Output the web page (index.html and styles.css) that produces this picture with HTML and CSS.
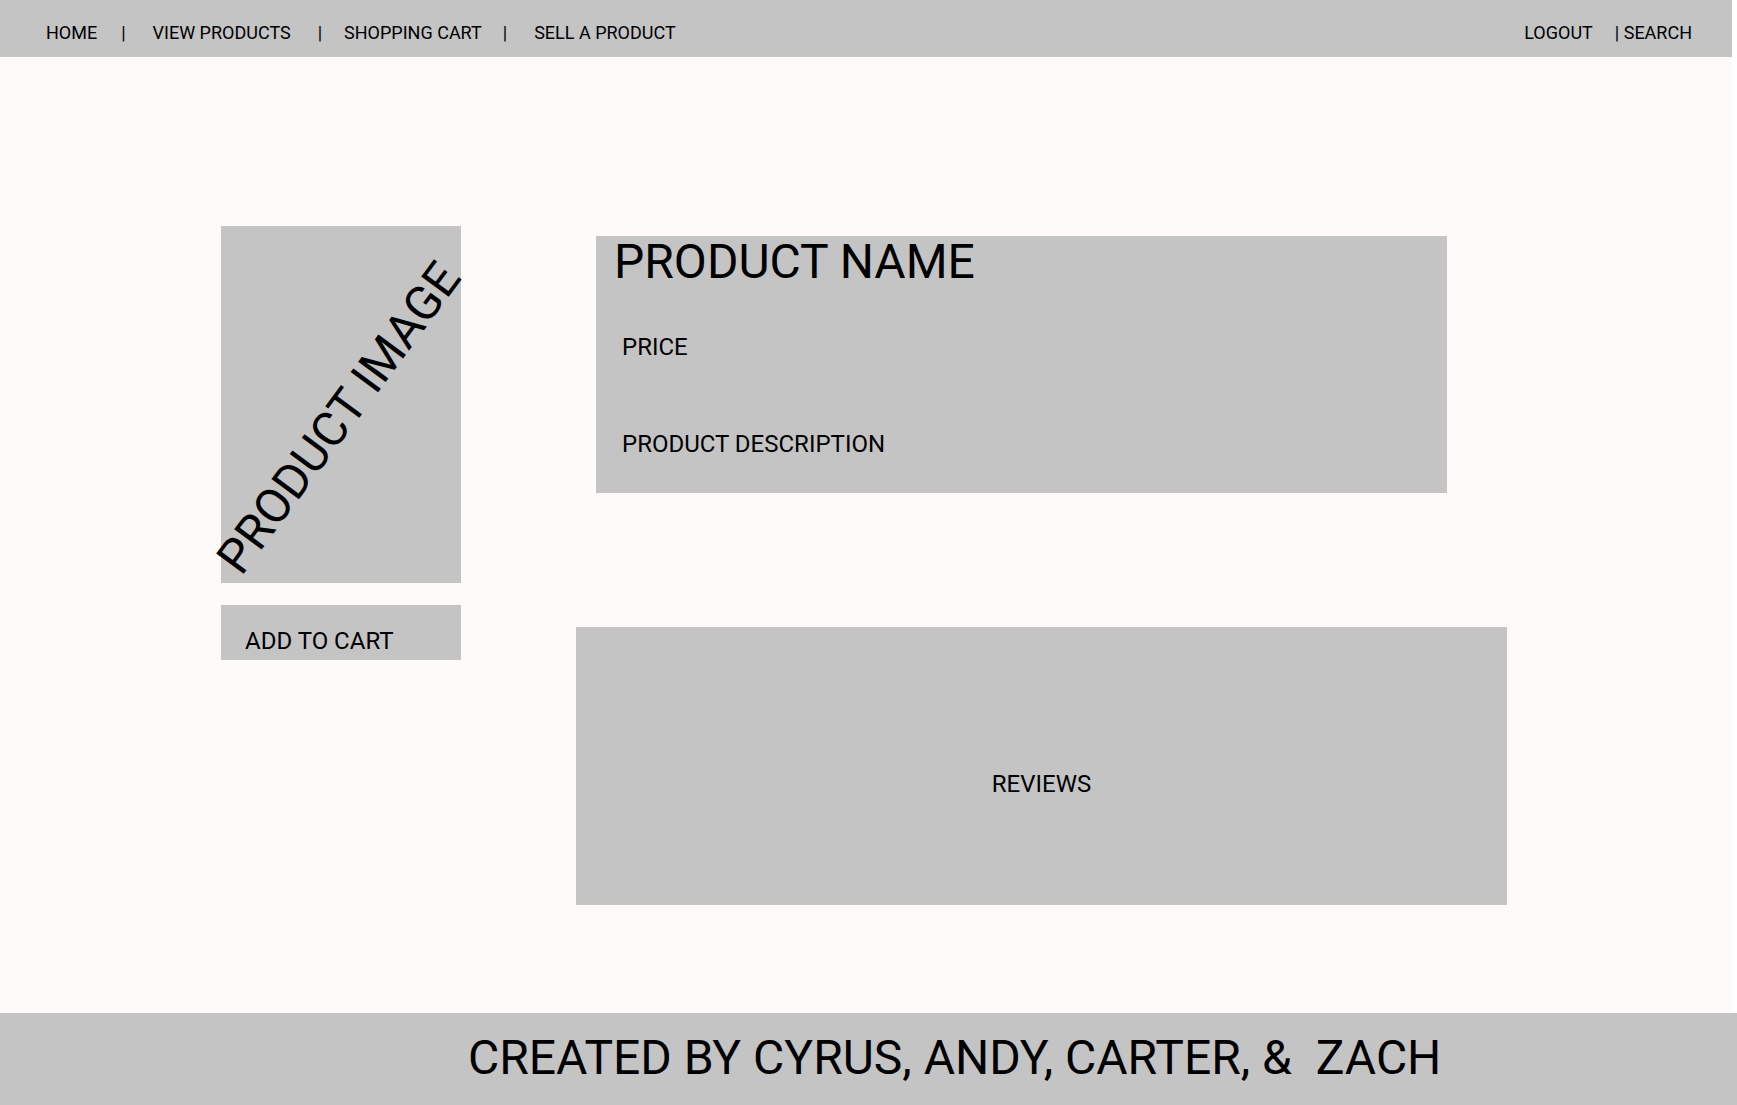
FILE: index.html
```html
<!DOCTYPE html>
<html lang="en">
<head>
<meta charset="utf-8">
<title>Product</title>
<link rel="stylesheet" href="styles.css">
</head>
<body>
<div class="page">
  <nav class="topnav">
    <div class="nav-left">
      <a class="nav-link home">HOME</a>
      <span class="sep sep1">|</span>
      <a class="nav-link view">VIEW PRODUCTS</a>
      <span class="sep sep2">|</span>
      <a class="nav-link cart">SHOPPING CART</a>
      <span class="sep sep3">|</span>
      <a class="nav-link sell">SELL A PRODUCT</a>
    </div>
    <div class="nav-right">
      <a class="nav-link logout">LOGOUT</a>
      <a class="nav-link search">| SEARCH</a>
    </div>
  </nav>
  <main class="content">
    <div class="left-col">
      <div class="product-image"><span class="image-label">PRODUCT IMAGE</span></div>
      <div class="add-cart">ADD TO CART</div>
    </div>
    <div class="right-col">
      <section class="info">
        <h1 class="product-name">PRODUCT NAME</h1>
        <p class="price">PRICE</p>
        <p class="desc">PRODUCT DESCRIPTION</p>
      </section>
      <section class="reviews">REVIEWS</section>
    </div>
  </main>
</div>
<footer class="footer">CREATED BY CYRUS, ANDY, CARTER, &amp;&nbsp; ZACH</footer>
</body>
</html>
```
FILE: styles.css
```css
html, body {
  margin: 0;
  padding: 0;
  background: #ffffff;
}

body {
  font-family: Roboto, "Liberation Sans", sans-serif;
  color: #000000;
  width: 1737px;
  overflow: hidden;
}

.page {
  width: 1732px;
  height: 1013px;
  background: #fffafa;
  display: flex;
  flex-direction: column;
}

/* ---------- nav ---------- */
.topnav {
  height: 57px;
  box-sizing: border-box;
  background: #c4c4c4;
  display: flex;
  justify-content: space-between;
  align-items: flex-start;
  padding: 22px 40px 0 46px;
  font-size: 18px;
  line-height: 21px;
  flex: none;
}

.nav-left,
.nav-right {
  display: flex;
  white-space: pre;
}

.nav-link {
  color: #000000;
  text-decoration: none;
}

.sep1 { margin-left: 24px; }
.view { margin-left: 27px; }
.sep2 { margin-left: 27px; }
.cart { margin-left: 22px; }
.sep3 { margin-left: 21px; }
.sell { margin-left: 27px; }

.search { margin-left: 22px; }

/* ---------- content ---------- */
.content {
  flex: 1;
  display: flex;
  align-items: flex-start;
  padding: 169px 0 0 221px;
}

.left-col {
  width: 240px;
  flex: none;
  margin-right: 115px;
}

.product-image {
  position: relative;
  height: 357px;
  background: #c4c4c4;
}

.image-label {
  position: absolute;
  left: calc(50% - 2px);
  top: calc(50% + 13px);
  transform: translate(-50%, -50%) rotate(-53.5deg);
  white-space: nowrap;
  font-size: 48px;
  line-height: 56px;
}

.add-cart {
  margin-top: 22px;
  height: 55px;
  box-sizing: border-box;
  background: #c4c4c4;
  padding: 22px 0 0 24px;
  font-size: 24px;
  line-height: 28px;
}

.right-col {
  margin-top: 10px;
  display: flex;
  flex-direction: column;
  align-items: flex-start;
}

.info {
  margin-left: 20px;
  width: 851px;
  height: 257px;
  box-sizing: border-box;
  background: #c4c4c4;
  padding-left: 18px;
}

.product-name {
  margin: -2px 0 0;
  font-size: 48px;
  font-weight: 400;
  line-height: 56px;
}

.price,
.desc {
  margin: 0;
  padding-left: 8px;
  font-size: 24px;
  line-height: 28px;
}

.price { margin-top: 43px; }
.desc { margin-top: 69px; }

.reviews {
  margin-top: 134px;
  width: 931px;
  height: 278px;
  box-sizing: border-box;
  background: #c4c4c4;
  text-align: center;
  padding-top: 143px;
  font-size: 24px;
  line-height: 28px;
}

/* ---------- footer ---------- */
.footer {
  height: 92px;
  box-sizing: border-box;
  background: #c4c4c4;
  padding: 17px 0 0 468px;
  font-size: 48px;
  line-height: 56px;
  white-space: nowrap;
}
```
